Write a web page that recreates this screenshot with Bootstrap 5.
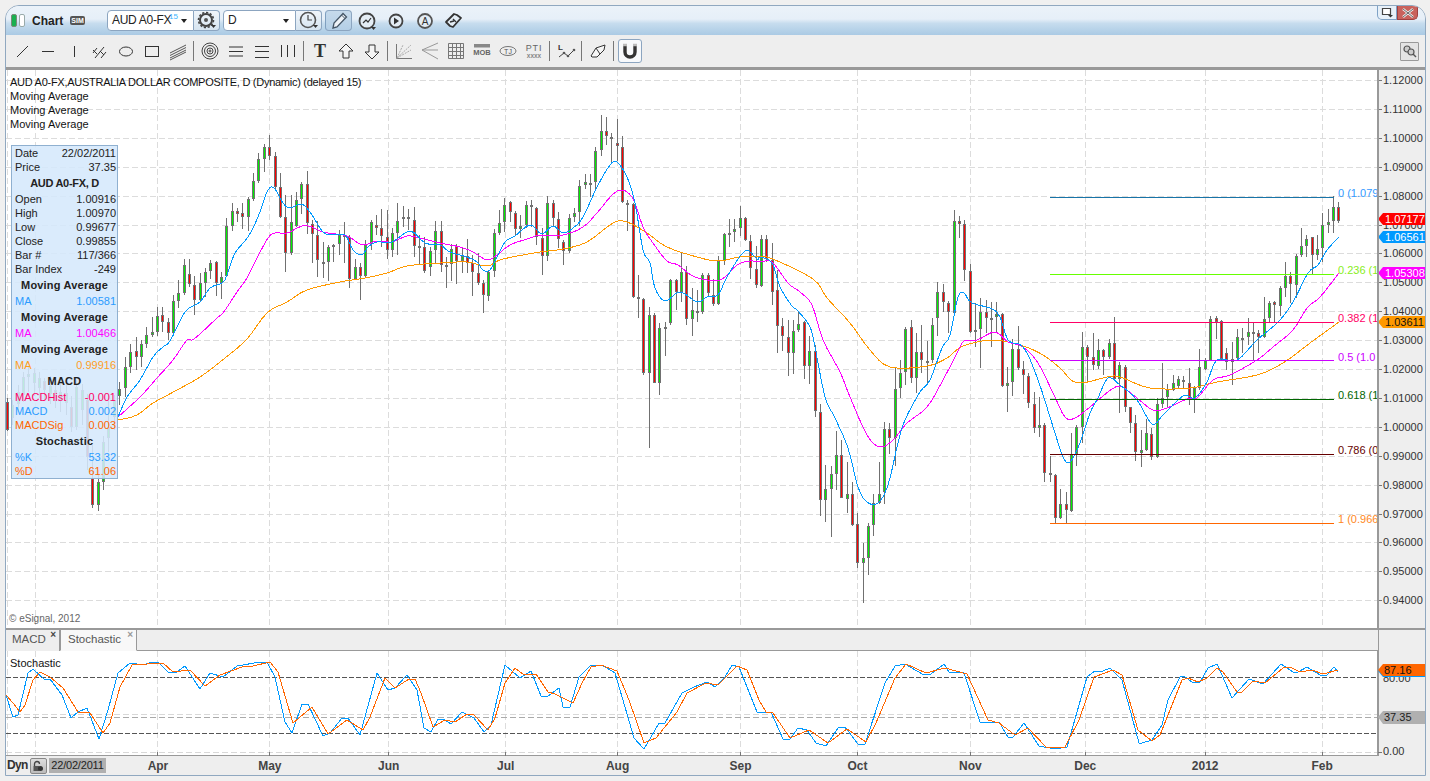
<!DOCTYPE html>
<html lang="en">
<head>
<meta charset="utf-8">
<title>Chart</title>
<link href="https://cdn.jsdelivr.net/npm/bootstrap@5.3.0/dist/css/bootstrap.min.css" rel="stylesheet">
<style>
html,body{height:781px;overflow:hidden}
body{background:#f0f0f0;font-family:"Liberation Sans",Arial,sans-serif;font-size:11px;color:#222;padding:5px 0 0 5px}
.cwin{width:1421px;height:771px;border:1px solid #90a8c0;border-radius:14px 14px 0 0;background:#eee;overflow:hidden}
.ttl{height:29px;background:linear-gradient(#ebf2f9 0,#e6eff8 45%,#c6dcee 60%,#aacae4 100%);padding-left:5px}
.stat{width:6px;height:13px;border-radius:2px;border:1px solid #7a8a7a;margin-right:2px}
.stat-on{background:#19b050}
.stat-off{background:#fff;margin-right:7px;border-color:#9aa}
.ttl-name{font-size:12px;font-weight:700;color:#222;width:38px}
.simb{width:15px;height:9px;border-radius:2px;background:#555;color:#fff;font-size:7px;line-height:9px;font-weight:700;text-align:center;margin-right:22px}
.combo{height:21px;background:#fff;border:1px solid #8ca5c0;border-radius:4px 0 0 4px;font-size:12px;line-height:19px;padding-left:4px;position:relative;color:#222}
.combo-a{width:87px;letter-spacing:-.3px}
.combo-b{width:73px;margin-left:3px}
.sup15{color:#3bb6ff;font-size:8px;line-height:8px;letter-spacing:0;position:absolute;left:61px;top:2px}
.caret-d{position:absolute;right:6px;top:8px;border:3px solid transparent;border-top:4px solid #222;border-bottom:0}
.ibtn{width:26px;height:21px;padding:0;border:1px solid #8ca5c0;border-left:0;border-radius:0 4px 4px 0;background:linear-gradient(#f0f5fa,#d6e4f0);display:flex;align-items:center;justify-content:center}
.ibtn-on{width:27px;margin-left:3px;border-left:1px solid #7f9fbf;border-radius:4px;background:linear-gradient(#c6daec,#b4cfe6)}
.ibtn-plain{width:29px;height:21px;display:flex;align-items:center;justify-content:center}
.win-r{width:20px;height:14px;border:1px solid #7fa2c6;border-top:0;border-radius:0 0 0 5px;background:#e7f0f8;display:flex;align-items:center;justify-content:center;align-self:flex-start}
.win-x{width:21px;height:14px;border:1px solid #a04040;border-top:0;border-radius:0 0 5px 0;background:#c9625c;margin-right:7px;display:flex;align-items:center;justify-content:center;align-self:flex-start}
.tbar{height:32px;background:#eee;padding-left:3px}
.tbi{width:26px;height:24px;flex:none;display:block}
.tsep{width:1px;height:20px;background:#777;margin:0 3px 0 2px;flex:none}
.mag{width:24px;height:24px;border:1px solid #8ca5c0;border-radius:3px;margin-left:1px;background:#f7f9fb;display:flex;align-items:center;justify-content:center}
.pinb{width:19px;height:19px;border:1px solid #999;border-radius:1px;margin-right:6px;background:#e4e4e4;display:flex;align-items:center;justify-content:center}
.thick{height:3px;background:#999}
.thin2{height:2px;background:#999}
.plotw{height:558px;position:relative;background:#fff}
.plotsvg{display:block;width:1372px;height:558px}
.axsvg{display:block;width:47px;flex:none;background:#eee}
.head-lines{position:absolute;left:4px;top:5px;line-height:14px;font-size:11px;color:#111}
.head-first{letter-spacing:-.27px}
.esig{position:absolute;left:3px;bottom:4px;font-size:10px;color:#666;line-height:11px}
.info{position:absolute;left:5px;top:75px;width:107px;height:334px;border:1px solid #8fb0d0;background:rgba(213,232,252,.88);font-size:11px;line-height:14px;color:#222}
.irow{height:14px;padding:0 1px 0 3px}
.ihead{height:18px;line-height:18px;text-align:center;font-weight:700;letter-spacing:.2px;color:#222}
.ihead-tight{letter-spacing:-.3px}
.c-ma1{color:#2b9bff}.c-ma2{color:#ff00ff}.c-ma3{color:#ff9d1e}.c-hist{color:#ff0066}.c-sig{color:#ff6600}
.subw{height:126px}
.leftc{width:1372px;flex:none}
.nav.tabz{height:21px;border-bottom:1px solid #999;background:#eee;flex-wrap:nowrap}
.tabz .nav-link{height:21px;margin:0;padding:0 0 0 6px;font-size:11.5px;line-height:19px;color:#555;border:0;border-right:1px solid #999;border-radius:0;background:#eee;position:relative}
.tabz .tab-a{width:54px}
.tabz .tab-b{width:77px;padding-left:7px;border-left:1px solid #999}
.tabz .nav-link.active{background:#f8f8f8;height:21px;color:#555;border-bottom:1px solid #f8f8f8}
.xm{position:absolute;top:-2px;right:3px;font-size:10px;font-weight:700;color:#444;line-height:14px}
.active .xm{color:#999}
.subsvg{display:block;width:1372px;height:105px;background:#fff}
.datr{height:19px;background:#eee;font-weight:700;color:#444}
.dyn{font-size:12px;letter-spacing:-.7px;width:24px;padding-left:1px;color:#333;line-height:19px}
.lockb{width:17px;height:16px;border:1px solid #888;border-radius:2px;background:linear-gradient(#ddd,#bbb);margin-right:2px;display:flex;align-items:center;justify-content:center}
.dchip{width:57px;height:15px;background:#b0b0b0;font-size:11px;letter-spacing:-.2px;font-weight:400;line-height:15px;text-align:center;color:#222;flex:none;margin-right:1px}
.datesvg{display:block;width:1319px;height:19px}
svg text{font-family:"Liberation Sans",Arial,sans-serif}
.ax{font-size:11px;fill:#333}
.mth{font-size:12px;font-weight:700;fill:#444}
</style>
</head>
<body>
<div class="cwin d-flex flex-column">
  <div class="ttl d-flex align-items-center flex-none">
    <span class="stat stat-on"></span><span class="stat stat-off"></span>
    <span class="ttl-name">Chart</span>
    <span class="simb">SIM</span>
    <div class="combo combo-a">AUD A0-FX<span class="sup15">15</span><span class="caret-d"></span></div>
    <button class="btn ibtn" type="button"><svg width="22" height="19" viewBox="0 0 22 19"><circle cx="10" cy="9" r="6" fill="none" stroke="#444" stroke-width="2"/><circle cx="10" cy="9" r="7.5" fill="none" stroke="#444" stroke-width="1.6" stroke-dasharray="2.2 1.7"/><circle cx="10" cy="9" r="2" fill="#555"/><path d="M15 14h5l-2.500 3z" fill="#333"/></svg></button>
    <div class="combo combo-b">D<span class="caret-d"></span></div>
    <button class="btn ibtn" type="button"><svg width="22" height="19" viewBox="0 0 22 19"><circle cx="10" cy="9" r="7.500" fill="none" stroke="#555" stroke-width="1.600"/><path d="M10 4v5h4" fill="none" stroke="#444" stroke-width="1.200"/><path d="M15 14h5l-2.500 3z" fill="#333"/></svg></button>
    <button class="btn ibtn ibtn-on" type="button"><svg width="20" height="19" viewBox="0 0 20 19"><path d="M4 17l1-5L14 2.500l3.500 3.500L8 16z" fill="#eef3f8" stroke="#456" stroke-width="1.300"/><path d="M12.500 4l3.500 3.500" stroke="#456"/></svg></button>
    <span class="ibtn-plain"><svg width="22" height="20" viewBox="0 0 22 20"><circle cx="11" cy="10" r="7.500" fill="#e4edf5" stroke="#444" stroke-width="1.800"/><path d="M7 12l3-3 2 2 3-4" fill="none" stroke="#333" stroke-width="1.200"/><path d="M15 16h5l-2.500 3z" fill="#333"/></svg></span>
    <span class="ibtn-plain"><svg width="20" height="20" viewBox="0 0 20 20"><circle cx="10" cy="10" r="6.500" fill="#e4edf5" stroke="#444" stroke-width="1.800"/><path d="M8 6.500l5 3.500-5 3.500z" fill="#333"/></svg></span>
    <span class="ibtn-plain"><svg width="20" height="20" viewBox="0 0 20 20"><circle cx="10" cy="10" r="7" fill="#e4edf5" stroke="#555" stroke-width="1.800"/><text x="10" y="14" text-anchor="middle" font-size="10" fill="#333">A</text></svg></span>
    <span class="ibtn-plain"><svg width="20" height="20" viewBox="0 0 20 20"><path d="M2 11l8-8 3 1 4 3-8 9-3-1z" fill="#e4edf5" stroke="#333" stroke-width="1.800" stroke-linejoin="round"/><path d="M6 11l4-1M9 8l3 3" stroke="#333" stroke-width="1.400"/></svg></span>
    <span class="win-r ms-auto"><svg width="14" height="11" viewBox="0 0 14 11"><path d="M2.500 1.500h8v6h-8z" fill="#fff" stroke="#444" stroke-width="1.200"/><path d="M8 8h5l-2.500 2.500z" fill="#333"/></svg></span>
    <span class="win-x"><svg width="14" height="10" viewBox="0 0 14 10"><path d="M2 1l10 8M12 1L2 9" stroke="#eee" stroke-width="2.400"/><path d="M2 1l10 8M12 1L2 9" stroke="#666" stroke-width="1"/></svg></span>
  </div>
  <div class="tbar d-flex align-items-center">
    <svg class="tbi" viewBox="0 0 26 24"><path d="M8 18L19 7" stroke="#333" fill="none"/></svg>
    <svg class="tbi" viewBox="0 0 26 24"><path d="M7 12.500h12" stroke="#333" fill="none"/></svg>
    <svg class="tbi" viewBox="0 0 26 24"><path d="M13.500 7v11" stroke="#333" fill="none"/></svg>
    <svg class="tbi" viewBox="0 0 26 24"><path d="M6 14l4-5M8 19l9-11M14 19l5-6M6 11l4 4M13 12l4 4" stroke="#333" fill="none"/></svg>
    <svg class="tbi" viewBox="0 0 26 24"><ellipse cx="13" cy="12.500" rx="6.500" ry="4.500" stroke="#333" fill="none"/></svg>
    <svg class="tbi" viewBox="0 0 26 24"><rect x="6.500" y="7.500" width="13" height="10" stroke="#333" fill="none"/></svg>
    <svg class="tbi" viewBox="0 0 26 24"><path d="M5 14L21 6M5 16.500L21 8.500M5 19L21 11M5 21L21 13" stroke="#555" fill="none"/></svg>
    <span class="tsep"></span>
    <svg class="tbi" viewBox="0 0 26 24"><g stroke="#444" fill="none"><circle cx="13" cy="12" r="8"/><circle cx="13" cy="12" r="5.500"/><circle cx="13" cy="12" r="3"/><circle cx="13" cy="12" r="1"/></g></svg>
    <svg class="tbi" viewBox="0 0 26 24"><path d="M6 8h14M6 12.500h14M6 17h14" stroke="#333" fill="none"/></svg>
    <svg class="tbi" viewBox="0 0 26 24"><path d="M6 7.500h14M6 12.500h14M6 18.500h14" stroke="#333" fill="none"/></svg>
    <svg class="tbi" viewBox="0 0 26 24"><path d="M6.500 6v12M12.500 6v12M19.500 6v12" stroke="#333" fill="none"/></svg>
    <span class="tsep"></span>
    <svg class="tbi" viewBox="0 0 26 24"><text x="13" y="18" text-anchor="middle" font-size="18" font-weight="700" fill="#333" class="ser-t">T</text></svg>
    <svg class="tbi" viewBox="0 0 26 24"><path d="M13 5l7 7h-4v7h-6v-7H6z" stroke="#333" fill="#f4f4f4"/></svg>
    <svg class="tbi" viewBox="0 0 26 24"><path d="M13 20l7-7h-4V6h-6v7H6z" stroke="#333" fill="#f4f4f4"/></svg>
    <span class="tsep"></span>
    <svg class="tbi" viewBox="0 0 26 24"><g fill="none"><path d="M5.500 5v14.500H21" stroke="#777"/><path d="M6 19L20 6M6 19l14-8M6 19L12 6" stroke="#aaa" stroke-dasharray="2 1"/></g></svg>
    <svg class="tbi" viewBox="0 0 26 24"><path d="M5 11L21 4M5 11h16M5 11l16 9" stroke="#999" fill="none"/></svg>
    <svg class="tbi" viewBox="0 0 26 24"><path d="M5.500 4.500h15v15h-15zM5.500 8.500h15M5.500 12.500h15M5.500 16.500h15M9.500 4.500v15M13.500 4.500v15M17.500 4.500v15" stroke="#777" fill="none"/></svg>
    <svg class="tbi" viewBox="0 0 26 24"><rect x="5" y="5" width="16" height="3.500" fill="#888"/><text x="13" y="16" text-anchor="middle" font-size="7.500" font-weight="700" fill="#666">MOB</text></svg>
    <svg class="tbi" viewBox="0 0 26 24"><ellipse cx="13" cy="12" rx="8" ry="4.500" stroke="#777" fill="none"/><text x="13" y="14.500" text-anchor="middle" font-size="7" fill="#555">TJ</text></svg>
    <svg class="tbi" viewBox="0 0 26 24"><text x="13" y="12" text-anchor="middle" font-size="9" fill="#666" letter-spacing=".8">PTI</text><text x="13" y="18.500" text-anchor="middle" font-size="6.500" font-weight="700" fill="#888">xxxx</text></svg>
    <span class="tsep"></span>
    <svg class="tbi" viewBox="0 0 26 24"><text x="5" y="11" font-size="8" font-weight="700" fill="#333">L</text><path d="M6 18l5-4 4 3 6-6" stroke="#444" fill="none"/><g fill="#555"><circle cx="11" cy="14" r="1.300"/><circle cx="15" cy="17" r="1.300"/><circle cx="21" cy="11" r="1.300"/></g></svg>
    <span class="tsep"></span>
    <svg class="tbi" viewBox="0 0 26 24"><path d="M6 17l5-8 9-3-1 5-7 7H7zM11 9l4 6" stroke="#333" fill="#f6f6f6"/></svg>
    <span class="tsep"></span>
    <span class="mag"><svg width="18" height="18" viewBox="0 0 18 18"><path d="M4 3v7a5 5 0 0 0 10 0V3" stroke="#333" stroke-width="3.400" fill="none"/><path d="M2 3h4M12 3h4" stroke="#bbb" stroke-width="2.500"/></svg></span>
    <span class="pinb ms-auto"><svg width="15" height="15" viewBox="0 0 15 15"><circle cx="5" cy="5" r="3" fill="#ccc" stroke="#555" stroke-width="1.200"/><circle cx="9" cy="8" r="3" fill="#ccc" stroke="#555" stroke-width="1.200"/><path d="M11 10l3 3" stroke="#555" stroke-width="1.400"/></svg></span>
  </div>
  <div class="thick"></div>
  <div class="d-flex">
    <div class="plotw">
      <svg id="plot" class="plotsvg" viewBox="6 70 1372 558"></svg>
      <div class="head-lines">
        <div class="head-first">AUD A0-FX,AUSTRALIA DOLLAR COMPOSITE, D (Dynamic) (delayed 15)</div>
        <div>Moving Average</div><div>Moving Average</div><div>Moving Average</div>
      </div>
      <div class="esig">© eSignal, 2012</div>
      <div class="info">
        <div class="irow d-flex justify-content-between"><span>Date</span><span>22/02/2011</span></div>
        <div class="irow d-flex justify-content-between"><span>Price</span><span>37.35</span></div>
        <div class="ihead ihead-tight">AUD A0-FX, D</div>
        <div class="irow d-flex justify-content-between"><span>Open</span><span>1.00916</span></div>
        <div class="irow d-flex justify-content-between"><span>High</span><span>1.00970</span></div>
        <div class="irow d-flex justify-content-between"><span>Low</span><span>0.99677</span></div>
        <div class="irow d-flex justify-content-between"><span>Close</span><span>0.99855</span></div>
        <div class="irow d-flex justify-content-between"><span>Bar #</span><span>117/366</span></div>
        <div class="irow d-flex justify-content-between"><span>Bar Index</span><span>-249</span></div>
        <div class="ihead">Moving Average</div>
        <div class="irow d-flex justify-content-between c-ma1"><span>MA</span><span>1.00581</span></div>
        <div class="ihead">Moving Average</div>
        <div class="irow d-flex justify-content-between c-ma2"><span>MA</span><span>1.00466</span></div>
        <div class="ihead">Moving Average</div>
        <div class="irow d-flex justify-content-between c-ma3"><span>MA</span><span>0.99916</span></div>
        <div class="ihead">MACD</div>
        <div class="irow d-flex justify-content-between c-hist"><span>MACDHist</span><span>-0.001</span></div>
        <div class="irow d-flex justify-content-between c-ma1"><span>MACD</span><span>0.002</span></div>
        <div class="irow d-flex justify-content-between c-sig"><span>MACDSig</span><span>0.003</span></div>
        <div class="ihead">Stochastic</div>
        <div class="irow d-flex justify-content-between c-ma1"><span>%K</span><span>53.32</span></div>
        <div class="irow d-flex justify-content-between c-sig"><span>%D</span><span>61.06</span></div>
      </div>
    </div>
    <svg id="axis" class="axsvg" height="558" viewBox="1378 70 47 558"></svg>
  </div>
  <div class="thin2"></div>
  <div class="d-flex subw">
    <div class="leftc">
      <ul class="nav tabz">
        <li class="nav-item"><a class="nav-link tab-a" href="#">MACD<span class="xm">×</span></a></li>
        <li class="nav-item"><a class="nav-link tab-b active" href="#">Stochastic<span class="xm">×</span></a></li>
      </ul>
      <svg id="sub" class="subsvg" viewBox="6 651 1372 105"></svg>
    </div>
    <svg id="subax" class="axsvg" height="126" viewBox="1378 630 47 126"></svg>
  </div>
  <div class="datr d-flex align-items-center">
    <span class="dyn">Dyn</span>
    <span class="lockb"><svg width="12" height="12" viewBox="0 0 12 12"><path d="M2.500 6V4a2.500 2.500 0 0 1 5 0" fill="none" stroke="#444" stroke-width="1.300"/><rect x="1.500" y="6" width="6" height="5" fill="#555"/><circle cx="8.500" cy="8.500" r="2.500" fill="#333"/></svg></span>
    <span class="dchip">22/02/2011</span>
    <svg id="dates" class="datesvg" viewBox="106 756 1319 19"></svg>
  </div>
</div>
<script>
var g='g',r='r',n='n';
var C=[
[7,398,402,430,431,r],[12,400,405,418,425,g],[18,385,392,404,412,g],[23,372,377,395,402,g],[28,366,374,377,392,g],[34,368,373,383,396,g],[39,372,378,388,398,g],[44,378,381,390,400,r],[50,376,386,394,404,g],[55,380,390,398,408,r],[60,384,392,400,412,g],[66,382,393,403,415,g],[71,396,407,427,432,r],[76,380,387,427,430,g],[82,384,390,410,425,g],[87,394,400,457,470,r],[92,445,478,505,508,r],[98,470,482,505,511,g],[103,436,442,482,490,g],[108,400,427,438,452,g],[114,395,400,417,430,g],
[119,382,389,396,405,g],[125,357,367,388,397,g],[130,344,352,367,373,g],[136,337,351,357,370,r],[141,340,344,357,367,g],[146,327,335,344,348,g],[152,317,332,335,337,g],[157,307,316,332,336,g],[162,307,315,322,332,r],[168,318,322,333,340,r],[173,295,301,333,335,g],[178,280,293,301,308,g],[184,259,265,293,295,g],[189,259,274,284,287,r],[194,276,285,300,315,r],[200,273,283,300,302,g],[205,268,272,283,297,g],[210,260,263,271,279,g],[216,261,262,283,296,r],[221,272,277,283,299,g],[226,218,226,276,277,g],[232,203,211,226,231,g],[237,208,211,214,222,r],[242,203,213,217,229,r],[248,197,199,217,231,g],[253,173,181,199,201,g],[258,153,159,181,183,g],[264,144,147,159,172,g],[269,135,147,156,160,r],[275,152,156,187,189,r],[280,173,187,217,218,r],[285,195,217,253,272,r],[291,195,222,253,255,g],[296,192,200,226,227,g],[301,182,184,199,214,g],[307,171,184,223,234,r],[312,220,224,234,263,r],[317,221,235,260,277,r],[323,242,262,264,278,n],[328,245,247,262,281,g],[333,244,245,247,262,g],[339,230,235,244,255,g],[344,222,235,236,263,n],[349,235,237,279,288,r],[355,259,267,279,280,g],[360,263,267,276,300,r],[365,240,245,276,278,g],[371,220,222,244,250,g],[376,215,225,228,235,r],[381,209,228,236,247,r],[387,210,237,250,259,r],[392,228,233,250,257,g],[397,203,221,233,255,g],[403,206,217,218,227,n],[408,209,217,219,230,r],[414,207,220,246,257,r],[419,235,246,247,264,n],[424,237,247,271,273,r],[430,247,251,267,276,g],[435,221,231,250,263,g],
[441,221,231,265,272,r],[446,257,265,266,288,n],[451,244,249,264,281,g],[456,244,246,261,284,r],[462,248,256,261,273,g],[467,239,256,263,273,r],[472,255,263,272,296,r],[478,253,273,283,285,r],[483,280,283,295,313,r],[488,270,272,296,301,g],[494,229,233,271,277,g],[499,210,223,233,235,g],[504,198,205,222,232,g],[510,201,202,212,222,r],[515,211,213,229,235,r],[520,215,226,229,238,g],[526,201,205,225,228,g],[531,200,205,207,227,r],[536,207,208,237,245,r],[542,228,238,256,275,r],[547,196,203,256,261,g],[553,200,203,218,226,r],[558,212,219,239,248,r],[563,240,242,251,265,r],[569,214,218,251,253,g],[574,208,213,217,222,g],[579,180,186,212,226,g],[585,174,182,185,189,g],[590,174,183,184,197,n],[595,147,151,182,190,g],[601,115,131,150,156,g],[606,117,131,136,145,r],[611,133,137,138,163,n],[617,119,143,146,161,r],[622,136,147,202,203,r],[627,200,203,204,231,n],[633,203,204,297,298,r],[638,275,297,299,318,n],[643,298,299,373,375,r],[649,307,315,373,448,g],[654,313,315,383,383,r],[659,323,328,383,395,g],[665,322,327,329,356,n],[670,279,280,323,325,g],[676,279,280,292,310,r],[681,253,272,292,302,g],[686,266,272,319,325,r],[692,288,310,319,336,g],[697,290,311,313,322,n],[702,273,275,312,314,g],[708,273,275,293,296,r],[713,279,295,304,306,r],[718,256,261,304,305,g],[724,233,234,261,265,g],[729,219,233,234,247,n],[734,219,229,232,242,g],[740,206,218,228,236,g],[745,217,218,240,241,r],[750,235,241,268,279,r],[756,246,269,285,288,r],
[761,235,239,286,287,g],[766,235,239,259,262,r],[772,243,260,292,305,r],[777,270,290,326,353,r],[782,318,326,336,351,r],[788,320,337,353,376,r],[793,320,331,353,374,g],[798,311,324,330,332,g],[804,321,322,366,379,r],[809,336,351,366,384,g],[815,345,351,411,417,r],[820,404,412,500,516,r],[825,465,489,500,522,g],[831,466,474,489,537,g],[836,431,455,474,490,g],[841,440,455,498,498,r],[847,462,494,499,513,g],[852,482,494,525,526,r],[857,513,524,563,568,r],[863,543,558,563,603,g],[868,523,526,558,575,g],[873,494,503,525,536,g],[879,462,494,503,504,g],[884,422,429,492,504,g],[889,423,429,438,454,r],[895,368,389,438,466,g],[900,360,373,388,398,g],[905,327,329,372,385,g],[911,320,327,378,383,r],[916,333,352,378,393,g],[921,325,352,360,373,r],[927,341,361,363,385,n],[932,318,325,360,363,g],[937,282,292,318,336,g],[943,284,292,302,312,r],[948,301,303,312,333,r],[954,210,221,313,314,g],[959,216,221,224,238,r],[964,220,224,270,281,r],[970,264,271,332,333,r],[975,303,330,332,347,n],[980,298,312,329,368,g],[986,300,312,318,333,r],[991,302,318,319,347,n],[996,302,314,317,333,g],[1002,313,314,386,387,r],[1007,367,383,386,412,g],[1012,339,349,382,396,g],[1018,326,349,368,370,r],[1023,361,369,375,394,r],[1028,373,376,403,408,r],[1034,392,404,428,433,r],[1039,397,425,428,437,g],
[1044,423,425,473,482,r],[1050,456,473,475,482,n],[1055,474,475,518,523,r],[1060,489,504,518,519,g],[1066,492,504,510,523,r],[1071,433,454,511,512,g],[1076,425,427,454,466,g],[1082,332,347,427,443,g],[1087,345,347,357,383,r],[1093,333,357,365,370,r],[1098,339,350,366,369,g],[1103,349,350,357,375,r],[1109,339,343,357,359,g],[1114,317,343,379,381,r],[1119,362,365,379,413,g],[1125,365,367,407,412,r],[1130,407,407,423,433,r],[1135,415,423,452,461,r],[1141,430,450,453,467,g],[1146,419,433,450,451,g],[1151,428,434,457,460,r],[1157,398,404,457,458,g],[1162,363,398,404,408,g],[1167,384,390,397,407,g],[1173,375,383,390,391,g],[1178,376,379,386,388,g],[1183,376,380,381,388,n],[1189,368,383,400,405,r],[1194,386,388,400,413,g],[1199,349,367,388,390,g],[1205,358,360,369,370,g],[1210,316,319,360,361,g],[1216,316,318,322,339,r],[1221,320,321,360,361,r],[1226,348,353,362,370,r],[1232,342,359,362,385,g],
[1237,329,337,358,360,g],[1242,328,338,339,353,n],[1248,318,332,337,345,g],[1253,322,332,334,360,n],[1258,330,333,337,353,r],[1264,297,319,337,338,g],[1269,301,303,318,323,g],[1274,301,302,305,322,r],[1280,286,288,306,316,g],[1285,262,276,288,297,g],[1290,272,276,284,303,r],[1296,254,256,285,298,g],[1301,228,246,255,257,g],[1306,235,239,246,257,g],[1312,237,237,255,274,r],[1317,235,249,255,260,g],[1322,213,225,248,262,g],[1328,209,222,225,233,g],[1333,196,207,221,233,g],[1338,202,207,221,223,r]];
var MB="118,417 127,397 140,380 153,357 163,347 170,341 182,317 189,308 200,302 210,288 222,283 227,275 235,253 248,237 258,217 268,190 275,189 283,203 290,208 302,204 312,215 323,232 333,235 345,235 353,250 362,255 368,247 377,242 392,242 410,231 425,243 440,245 450,252 467,257 477,262 483,270 490,270 497,257 505,242 515,236 530,225 542,234 553,226 563,233 573,228 583,217 597,187 610,165 617,162 627,177 635,203 643,250 650,263 655,288 665,301 680,292 697,302 707,297 718,295 727,277 745,251 757,259 760,257 772,263 780,287 792,306 798,311 810,327 815,347 825,397 835,418 848,448 858,487 867,502 878,503 888,485 898,443 905,420 920,392 930,380 942,348 950,335 958,297 964,293 972,303 997,312 1008,340 1023,347 1037,377 1055,433 1063,457 1070,462 1080,443 1090,413 1098,398 1108,378 1120,385 1137,400 1152,424 1163,415 1183,396 1195,398 1207,382 1217,360 1237,360 1257,340 1278,322 1293,302 1308,273 1318,265 1327,250 1339,237";
var MM="118,417 140,397 157,378 173,360 187,340 194,339 217,318 223,313 237,292 247,278 257,258 268,238 275,233 287,233 302,226 312,227 323,232 347,236 362,245 377,241 392,242 407,236 420,238 440,243 460,247 473,252 487,260 497,255 510,245 530,238 540,235 563,235 583,227 597,213 617,191 632,197 643,227 653,243 667,261 678,265 695,277 720,280 737,265 750,261 760,262 772,262 788,283 800,292 812,305 823,340 840,372 850,397 867,435 880,447 893,440 907,423 927,407 943,380 957,353 964,341 977,340 995,332 1008,342 1023,347 1038,363 1053,393 1065,417 1075,418 1090,407 1112,389 1122,387 1137,398 1153,410 1167,408 1187,399 1197,398 1213,380 1230,375 1257,360 1273,347 1293,330 1307,308 1320,297 1339,273";
var MO="118,420 137,415 153,403 177,390 200,377 225,358 247,339 267,313 287,302 307,290 340,282 365,278 387,273 407,266 440,263 467,262 487,266 503,259 540,252 563,249 587,242 613,223 627,222 647,233 667,247 697,257 718,261 740,257 760,257 773,259 813,279 827,298 850,323 870,350 890,367 927,366 947,358 963,346 993,340 1023,346 1043,355 1060,368 1077,383 1107,377 1120,377 1150,388 1190,388 1217,382 1257,375 1283,363 1310,343 1339,322";
var MONTHS=[[35,''],[157,'Apr'],[269,'May'],[388,'Jun'],[505,'Jul'],[617,'Aug'],[740,'Sep'],[857,'Oct'],[970,'Nov'],[1085,'Dec'],[1205,'2012'],[1322,'Feb']];
var GR='#dcdcdc';
function vg(y1,y2){var s='<line x1="7.5" x2="7.5" y1="'+y1+'" y2="'+y2+'" stroke="'+GR+'" stroke-dasharray="6 3"/>';MONTHS.forEach(function(m){s+='<line x1="'+(m[0]+.5)+'" x2="'+(m[0]+.5)+'" y1="'+y1+'" y2="'+y2+'" stroke="'+GR+'" stroke-dasharray="6 3"/>'});return s}
var p=vg(70,628),ax='<rect x="1378" y="70" width="47" height="558" fill="#eee"/>';
for(var k=0;k<19;k++){var y=Math.round(80+k*28.9)+.5;p+='<line x1="6" x2="1377" y1="'+y+'" y2="'+y+'" stroke="'+GR+'" stroke-dasharray="6 3"/>';ax+='<line x1="1378" x2="1382" y1="'+y+'" y2="'+y+'" stroke="#777"/><text class="ax" x="1383" y="'+(y+3.5)+'">'+(1.12-k*.01).toFixed(5)+'</text>'}
var cand='';
C.forEach(function(c){var x=c[0],h=c[1],t=c[2],b=c[3],l=c[4],k=c[5];
 cand+='<rect x="'+x+'" y="'+h+'" width="1" height="'+(l-h)+'" fill="#707070"/>';
 cand+='<rect x="'+(x-1)+'" y="'+t+'" width="3" height="'+Math.max(b-t,2)+'" fill="#707070"/>';
 if(k!='n'&&b-t>2)cand+='<rect x="'+x+'" y="'+(t+1)+'" width="1" height="'+(b-t-2)+'" fill="'+(k=='g'?'#00f000':'#ff0000')+'"/>';});
p+='<g shape-rendering="crispEdges">'+cand+'</g>';
function pl(pts,col){return '<polyline points="'+pts+'" fill="none" stroke="'+col+'" stroke-width="1" shape-rendering="crispEdges"/>'}
function smooth(str){var P=str.split(' ').map(function(a){return a.split(',').map(Number)}),o=[];
 for(var i=0;i<P.length-1;i++){var a=P[Math.max(i-1,0)],b=P[i],c=P[i+1],d=P[Math.min(i+2,P.length-1)];
  for(var j=0;j<4;j++){var t=j/4,t2=t*t,t3=t2*t;
   var f=function(q){return .5*(2*b[q]+(c[q]-a[q])*t+(2*a[q]-5*b[q]+4*c[q]-d[q])*t2+(3*b[q]-a[q]-3*c[q]+d[q])*t3)};
   o.push(f(0).toFixed(1)+','+f(1).toFixed(1));}}
 o.push(P[P.length-1].join(','));return o.join(' ')}
p+=pl(smooth(MO),'#ff9900')+pl(smooth(MM),'#ff00ff')+pl(smooth(MB),'#0099ff');
var F=[[197,'#1874a8','0 (1.079','#3399ff',193],[274,'#66ff00','0.236 (1','#88ee22',270],[322,'#ff0066','0.382 (1','#ff0066',318],[360,'#cc00ff','0.5 (1.0','#cc00ff',357],[399,'#006600','0.618 (1','#006600',395],[454,'#660000','0.786 (0','#660000',450],[523,'#ff6600','1 (0.966','#ff8822',519]];
F.forEach(function(f){p+='<line x1="1050" x2="1334" y1="'+(f[0]+.5)+'" y2="'+(f[0]+.5)+'" stroke="'+f[1]+'"/><text x="1338" y="'+(f[4]+4)+'" font-size="11" fill="'+f[3]+'">'+f[2]+'</text>'});
p+='<line x1="1377.5" x2="1377.5" y1="70" y2="628" stroke="#999"/>';
document.getElementById('plot').innerHTML=p;
function tag(y,fill,txt,tc){var a=y-6,b=y+6;return '<path d="M1378 '+y+'L1383 '+a+'H1425V'+b+'H1383Z" fill="'+fill+'"/><text class="ax" x="1385" y="'+(y+4)+'" style="fill:'+tc+'">'+txt+'</text>'}
ax+=tag(219,'#ff0000','1.07177','#fff')+tag(237,'#0099ff','1.06561','#fff')+tag(273,'#ff00ff','1.05308','#fff')+tag(322,'#ff9900','1.03611','#111');
ax+='<line x1="1378.5" x2="1378.5" y1="70" y2="628" stroke="#999"/>';
document.getElementById('axis').innerHTML=ax;
function z12(a){return a.map(function(q){return (395+q[0]/2.09).toFixed(0)+','+(650+q[1]/3).toFixed(0)}).join(' ')}
function z7(a){return a.map(function(q){return q.join(',')}).join(' ')}
var SB=z7([[6,695],[13,717],[18,715],[28,673],[33,669],[45,680],[50,679],[62,695],[71,718],[78,712],[87,708],[99,739],[108,710],[118,673],[130,663],[143,665],[152,662],[158,662],[168,672],[177,672],[185,666],[200,689],[210,673],[223,677],[237,666],[260,662],[267,662],[275,677],[285,722],[292,733],[302,704],[308,704],[323,736],[330,733],[342,718],[348,718],[360,735],[377,673],[388,690]])+' '+z12([[0,115],[25,75],[45,120],[60,235],[75,245],[90,207],[105,210],[118,222],[140,185],[165,205],[185,247],[200,225],[229,45],[262,85],[285,62],[305,138],[320,138],[342,115],[352,172],[365,172],[385,80],[410,45],[432,45],[460,70],[480,170],[500,265],[520,298],[535,260],[552,218],[565,218],[600,130],[625,112],[652,95],[668,112],[690,80],[705,45],[720,50],[757,185],[785,187],[810,267],[825,267],[843,235],[862,240],[880,278],[900,287],[925,235],[940,232],[968,283],[982,283],[1025,100],[1045,47],[1065,42],[1105,75],[1120,72],[1147,43],[1157,67],[1190,68],[1222,215],[1262,217],[1282,262],[1292,262],[1315,220],[1347,288],[1380,298],[1405,290],[1447,80],[1462,62],[1480,62],[1495,53],[1520,90],[1555,280]])+' '+z7([[1142,743],[1152,740],[1162,725],[1168,700],[1180,677],[1184,676],[1193,683],[1200,682],[1208,668],[1217,664],[1222,675],[1232,698],[1249,679],[1263,684],[1281,664],[1293,672],[1298,672],[1307,667],[1320,675],[1327,675],[1334,667],[1338,672]]);
var SO=z7([[6,695],[13,703],[20,712],[25,705],[33,680],[40,672],[50,677],[63,688],[78,712],[90,713],[103,733],[110,723],[120,687],[132,665],[163,663],[173,672],[190,670],[205,686],[220,675],[242,667],[253,666],[270,662],[278,672],[293,723],[312,707],[328,734],[347,720],[363,730],[370,717],[385,678]])+' '+z12([[0,115],[30,88],[42,88],[55,130],[80,232],[105,210],[125,215],[150,193],[165,195],[195,240],[210,205],[230,100],[250,55],[270,75],[295,72],[320,125],[335,132],[372,160],[390,100],[410,52],[430,45],[465,62],[490,150],[520,280],[545,265],[590,185],[610,130],[650,100],[675,105],[715,47],[735,60],[760,150],[775,185],[790,190],[825,265],[865,240],[905,280],[945,237],[985,275],[1005,220],[1045,85],[1068,42],[1110,70],[1150,55],[1195,72],[1240,210],[1262,218],[1295,255],[1322,233],[1360,290],[1400,292],[1430,210],[1460,80],[1500,60],[1520,75]])+' '+z7([[1138,730],[1152,741],[1160,735],[1170,710],[1182,680],[1188,678],[1198,682],[1207,678],[1217,668],[1223,672],[1237,692],[1242,692],[1253,681],[1265,683],[1283,668],[1290,667],[1300,672],[1312,670],[1323,674],[1338,670]]);
function hl(y,col,d){return '<line x1="6" x2="1377" y1="'+y+'" y2="'+y+'" stroke="'+col+'" stroke-dasharray="'+d+'"/>'}
var s=vg(651,755)+hl(714.5,'#d8d8d8','6 3')+hl(752.5,'#d8d8d8','6 3')+hl(717.5,'#aaa','6 3')+hl(677.5,'#555','5 2')+hl(733.5,'#555','5 2')+pl(SB,'#0099ff')+pl(SO,'#ff6600');
s+='<text x="10" y="667" font-size="11" fill="#111">Stochastic</text>';
s+='<line x1="6" x2="1378" y1="755.5" y2="755.5" stroke="#999"/><line x1="1377.5" x2="1377.5" y1="651" y2="756" stroke="#999"/>';
MONTHS.forEach(function(m){if(m[1])s+='<line x1="'+(m[0]+.5)+'" x2="'+(m[0]+.5)+'" y1="752" y2="756" stroke="#777"/>'});
document.getElementById('sub').innerHTML=s;
var sa='<rect x="1378" y="630" width="47" height="126" fill="#eee"/><line x1="1378.500" x2="1378.500" y1="630" y2="756" stroke="#999"/>';
sa+='<text class="ax" x="1383" y="682">80.00</text><text class="ax" x="1383" y="721">37.36</text><text class="ax" x="1383" y="755">0.00</text><line x1="1378" x2="1382" y1="752.500" y2="752.500" stroke="#777"/>';
sa+='<path d="M1378 671L1383 666H1425V677H1383Z" fill="#0099ff"/>';
sa+='<path d="M1378 670L1383 664H1425V676H1383Z" fill="#ff6600"/><text class="ax" x="1384" y="674" style="fill:#111">87.16</text>';
sa+='<path d="M1378 717L1383 711H1425V724H1383Z" fill="#b0b0b0"/><text class="ax" x="1384" y="721" style="fill:#222">37.35</text>';
document.getElementById('subax').innerHTML=sa;
var d='';MONTHS.forEach(function(m){if(m[1])d+='<text class="mth" x="'+m[0]+'" y="770" text-anchor="middle">'+m[1]+'</text>'});
document.getElementById('dates').innerHTML=d;
</script>
<style>.ser-t{font-family:"Liberation Serif",serif!important}</style>
<script src="https://cdn.jsdelivr.net/npm/bootstrap@5.3.0/dist/js/bootstrap.bundle.min.js"></script>
</body>
</html>
